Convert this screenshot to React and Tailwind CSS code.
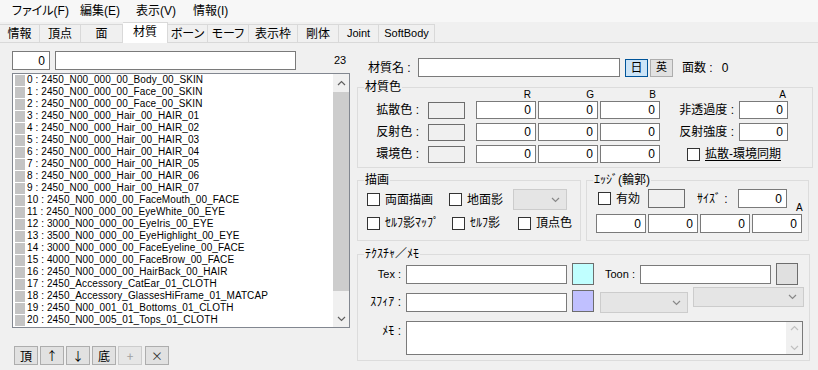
import React from "react";

const items = [
    "0 : 2450_N00_000_00_Body_00_SKIN",
    "1 : 2450_N00_000_00_Face_00_SKIN",
    "2 : 2450_N00_000_00_Face_00_SKIN",
    "3 : 2450_N00_000_Hair_00_HAIR_01",
    "4 : 2450_N00_000_Hair_00_HAIR_02",
    "5 : 2450_N00_000_Hair_00_HAIR_03",
    "6 : 2450_N00_000_Hair_00_HAIR_04",
    "7 : 2450_N00_000_Hair_00_HAIR_05",
    "8 : 2450_N00_000_Hair_00_HAIR_06",
    "9 : 2450_N00_000_Hair_00_HAIR_07",
    "10 : 2450_N00_000_00_FaceMouth_00_FACE",
    "11 : 2450_N00_000_00_EyeWhite_00_EYE",
    "12 : 3000_N00_000_00_EyeIris_00_EYE",
    "13 : 3500_N00_000_00_EyeHighlight_00_EYE",
    "14 : 3000_N00_000_00_FaceEyeline_00_FACE",
    "15 : 4000_N00_000_00_FaceBrow_00_FACE",
    "16 : 2450_N00_000_00_HairBack_00_HAIR",
    "17 : 2450_Accessory_CatEar_01_CLOTH",
    "18 : 2450_Accessory_GlassesHiFrame_01_MATCAP",
    "19 : 2450_N00_001_01_Bottoms_01_CLOTH",
    "20 : 2450_N00_005_01_Tops_01_CLOTH",
];

const tabs = [
    ["情報", "w-[40px]"],
    ["頂点", "w-[41px]"],
    ["面", "w-[42px]"],
    ["材質", "w-[45px]"],
    ["ボーン", "w-[40px]"],
    ["モーフ", "w-[41px]"],
    ["表示枠", "w-[49px]"],
    ["剛体", "w-[41px]"],
    ["Joint", "w-[40px]"],
    ["SoftBody", "w-[56px]"],
];

// half-width katakana read better without proportional alternates
function Hw({ children }) {
    return <span className="[font-feature-settings:normal]">{children}</span>;
}

function Num({ className = "", value = "0" }) {
    return (
        <div className={"bg-white border border-[#7a7a7a] flex items-center justify-end pr-[4px] " + className}>
            {value}
        </div>
    );
}

function Check({ label, className = "", underline }) {
    return (
        <div className={"flex items-center " + className}>
            <span className="w-[13px] h-[13px] border border-[#333333] bg-white shrink-0" />
            <span className={"ml-[5px] whitespace-nowrap " + (underline ? "underline underline-offset-2" : "")}>{label}</span>
        </div>
    );
}

function Chevron({ color = "#606060", up }) {
    return (
        <svg width="9" height="6" viewBox="0 0 9 6">
            <path d={up ? "M1 5 L4.5 1.5 L8 5" : "M1 1 L4.5 4.5 L8 1"} fill="none" stroke={color} strokeWidth="1.2" />
        </svg>
    );
}

function Combo({ className = "" }) {
    return (
        <div className={"bg-[#e5e5e5] border border-[#cccccc] flex items-center justify-end pr-[6px] " + className}>
            <Chevron color="#888888" />
        </div>
    );
}

function Group({ title, className = "", children }) {
    return (
        <div className={"relative border border-[#dcdcdc] " + className}>
            <span className="absolute left-[6px] top-[-8px] bg-[#f0f0f0] px-[1px] leading-[14px]">{title}</span>
            {children}
        </div>
    );
}

export default function App() {
    return (
        <div className="w-[818px] h-[370px] overflow-hidden bg-[#f0f0f0] text-[12px] leading-none text-black font-['Liberation_Sans','Noto_Sans_CJK_JP',sans-serif] [font-feature-settings:'palt']">
            {/* menu */}
            <div className="h-[22px] bg-[#f7f7f7] flex items-center pl-[12px]">
                <span className="w-[68px]">ファイル(F)</span>
                <span className="w-[56px]">編集(E)</span>
                <span className="w-[57px]">表示(V)</span>
                <span>情報(I)</span>
            </div>

            {/* tabs */}
            <div className="h-[20px] flex items-end">
                {tabs.map(([t, w], i) => {
                    const sel = t === "材質";
                    return (
                        <div
                            key={t}
                            className={
                                w +
                                " flex items-center justify-center border-t border-r border-[#d9d9d9] " +
                                (i > 0 ? "border-l-0 " : "") +
                                (sel
                                    ? "h-[21px] mb-[-1px] bg-white relative z-10 pb-[2px] border-l"
                                    : "h-[18px] bg-[#f0f0f0]") +
                                (/^[A-Za-z]/.test(t) ? " text-[11px]" : "")
                            }
                        >
                            {t}
                        </div>
                    );
                })}
            </div>

            <div className="flex h-[328px] border-t border-[#d9d9d9]">
                {/* left */}
                <div className="w-[352px] shrink-0 pl-[12px] pt-[8px]">
                    <div className="flex items-center">
                        <Num className="w-[38px] h-[19px]" />
                        <div className="ml-[5px] w-[241px] h-[19px] bg-white border border-[#7a7a7a]" />
                        <span className="ml-[38px] text-[11px]">23</span>
                    </div>
                    <div className="mt-[3px] w-[338px] h-[255px] border border-[#828790] bg-white flex">
                        <div className="flex-1 pl-[2px] font-['Liberation_Sans',sans-serif] text-[10px] tracking-[0.1px]">
                            {items.map((s) => (
                                <div key={s} className="h-[12px] flex items-center">
                                    <span className="w-[10px] h-[11px] bg-[#c4c4c4] mr-[2px] shrink-0" />
                                    <span className="whitespace-nowrap">{s}</span>
                                </div>
                            ))}
                        </div>
                        <div className="w-[16px] bg-[#f0f0f0] flex flex-col">
                            <div className="h-[17px] flex items-center justify-center">
                                <Chevron up />
                            </div>
                            <div className="mt-[1px] h-[199px] bg-[#cdcdcd]" />
                            <div className="flex-1" />
                            <div className="h-[17px] flex items-center justify-center">
                                <Chevron />
                            </div>
                        </div>
                    </div>
                    <div className="mt-[18px] pl-[2px] flex gap-[2px] font-['Noto_Sans_CJK_JP',sans-serif]">
                        {["頂", "↑", "↓", "底"].map((b) => (
                            <div key={b} className="w-[24px] h-[19px] border border-[#adadad] bg-[#e1e1e1] flex items-center justify-center">
                                {b}
                            </div>
                        ))}
                        <div className="w-[24px] h-[19px] border border-[#cccccc] bg-[#e6e6e6] text-[#a0a0a0] flex items-center justify-center">+</div>
                        <div className="ml-[1px] w-[24px] h-[19px] border border-[#adadad] bg-[#e1e1e1] flex items-center justify-center text-[#333333]">×</div>
                    </div>
                </div>

                {/* right */}
                <div className="flex-1 pl-[5px]">
                    <div className="mt-[15px] h-[19px] flex items-center">
                        <span className="ml-[11px] w-[50px]">材質名 :</span>
                        <div className="w-[202px] h-[19px] bg-white border border-[#7a7a7a]" />
                        <div className="ml-[5px] w-[23px] h-[18px] border border-[#005499] bg-[#cce4f7] flex items-center justify-center">日</div>
                        <div className="ml-[2px] w-[23px] h-[18px] border border-[#adadad] bg-[#e1e1e1] flex items-center justify-center text-[11px]">英</div>
                        <span className="ml-[9px]">面数 :</span>
                        <span className="ml-[9px]">0</span>
                    </div>

                    <Group title="材質色" className="mt-[10px] w-[456px] h-[81px]">
                        <div className="mt-[1px] h-[12px] flex items-center text-[10px]">
                            <span className="w-[118px]" />
                            <span className="w-[60px] text-right pr-[5px]">R</span>
                            <span className="ml-[2px] w-[60px] text-right pr-[4px]">G</span>
                            <span className="ml-[2px] w-[60px] text-right pr-[4px]">B</span>
                            <span className="w-[79px]" />
                            <span className="w-[49px] text-right pr-[2px]">A</span>
                        </div>
                        {[
                            ["拡散色 :", "非透過度 :"],
                            ["反射色 :", "反射強度 :"],
                            ["環境色 :", null],
                        ].map(([l, r], i) => (
                            <div key={l} className={"h-[18px] flex items-center " + (i > 0 ? "mt-[4px]" : "")}>
                                <span className="w-[61px] text-right">{l}</span>
                                <span className="ml-[9px] w-[37px] h-[17px] border border-[#6d6d6d] bg-[#f0f0f0]" />
                                <Num className="ml-[11px] w-[60px] h-[18px]" />
                                <Num className="ml-[2px] w-[60px] h-[18px]" />
                                <Num className="ml-[2px] w-[60px] h-[18px]" />
                                {r ? (
                                    <>
                                        <span className="w-[74px] text-right">{r}</span>
                                        <Num className="ml-[5px] w-[49px] h-[18px]" />
                                    </>
                                ) : (
                                    <Check label="拡散-環境同期" underline className="ml-[27px]" />
                                )}
                            </div>
                        ))}
                    </Group>

                    <div className="mt-[12px] flex">
                        <Group title="描画" className="w-[224px] h-[61px]">
                            <div className="mt-[8px] h-[21px] flex items-center pl-[9px]">
                                <Check label="両面描画" className="w-[82px]" />
                                <Check label="地面影" className="w-[64px]" />
                                <Combo className="w-[54px] h-[21px]" />
                            </div>
                            <div className="mt-[6px] h-[14px] flex items-center pl-[9px]">
                                <Check label={<Hw>ｾﾙﾌ影ﾏｯﾌﾟ</Hw>} className="w-[85px]" />
                                <Check label={<Hw>ｾﾙﾌ影</Hw>} className="w-[66px]" />
                                <Check label="頂点色" />
                            </div>
                        </Group>
                        <Group title={<Hw>ｴｯｼﾞ(輪郭)</Hw>} className="ml-[5px] w-[223px] h-[61px]">
                            <div className="mt-[8px] h-[19px] flex items-center pl-[11px]">
                                <Check label="有効" className="w-[50px]" />
                                <span className="w-[37px] h-[19px] border border-[#6d6d6d] bg-[#f0f0f0]" />
                                <span className="ml-[12px] w-[41px]"><Hw>ｻｲｽﾞ :</Hw></span>
                                <Num className="w-[49px] h-[19px]" />
                                <span className="ml-[9px] text-[10px] self-end mb-[-5px]">A</span>
                            </div>
                            <div className="mt-[6px] flex gap-[2px] pl-[9px]">
                                <Num className="w-[50px] h-[19px]" />
                                <Num className="w-[50px] h-[19px]" />
                                <Num className="w-[50px] h-[19px]" />
                                <Num className="w-[50px] h-[19px]" />
                            </div>
                        </Group>
                    </div>

                    <Group title={<Hw>ﾃｸｽﾁｬ／ﾒﾓ</Hw>} className="mt-[13px] w-[453px] h-[107px]">
                        <div className="mt-[8px] h-[22px] flex items-start">
                            <span className="w-[43px] text-right text-[11px] mt-[6px]">Tex :</span>
                            <div className="ml-[5px] mt-[2px] w-[161px] h-[19px] bg-white border border-[#7a7a7a]" />
                            <span className="ml-[5px] w-[22px] h-[22px] border border-[#6d6d6d] bg-[#c0ffff]" />
                            <span className="ml-[11px] w-[35px] text-[11px] mt-[6px]">Toon :</span>
                            <div className="mt-[2px] w-[131px] h-[19px] bg-white border border-[#7a7a7a]" />
                            <span className="ml-[5px] w-[22px] h-[22px] border border-[#6d6d6d] bg-[#e0e0e0]" />
                        </div>
                        <div className="mt-[2px] h-[25px] flex items-start">
                            <span className="w-[43px] text-right mt-[9px]"><Hw>ｽﾌｨｱ :</Hw></span>
                            <div className="ml-[5px] mt-[6px] w-[161px] h-[19px] bg-white border border-[#7a7a7a]" />
                            <span className="ml-[5px] mt-[3px] w-[22px] h-[22px] border border-[#6d6d6d] bg-[#c0c0ff]" />
                            <Combo className="ml-[6px] mt-[5px] w-[88px] h-[21px]" />
                            <Combo className="ml-[5px] w-[111px] h-[20px]" />
                        </div>
                        <div className="mt-[9px] flex items-start">
                            <span className="w-[43px] text-right mt-[4px]"><Hw>ﾒﾓ :</Hw></span>
                            <div className="ml-[5px] w-[397px] h-[34px] border border-[#7a7a7a] bg-white flex justify-end">
                                <div className="w-[16px] bg-[#f0f0f0] flex flex-col justify-between py-[3px] items-center">
                                    <Chevron up color="#c0c0c0" />
                                    <Chevron color="#c0c0c0" />
                                </div>
                            </div>
                        </div>
                    </Group>
                </div>
            </div>
        </div>
    );
}
